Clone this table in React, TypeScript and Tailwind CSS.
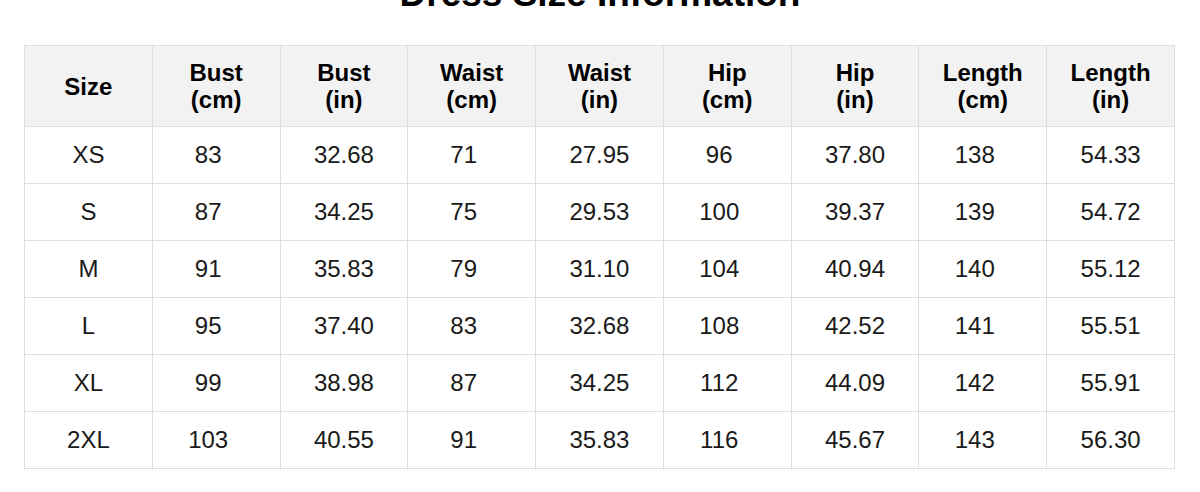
import React from "react";

const headers = [
  ["Size"],
  ["Bust", "(cm)"],
  ["Bust", "(in)"],
  ["Waist", "(cm)"],
  ["Waist", "(in)"],
  ["Hip", "(cm)"],
  ["Hip", "(in)"],
  ["Length", "(cm)"],
  ["Length", "(in)"],
];

const rows = [
  ["XS", "83", "32.68", "71", "27.95", "96", "37.80", "138", "54.33"],
  ["S", "87", "34.25", "75", "29.53", "100", "39.37", "139", "54.72"],
  ["M", "91", "35.83", "79", "31.10", "104", "40.94", "140", "55.12"],
  ["L", "95", "37.40", "83", "32.68", "108", "42.52", "141", "55.51"],
  ["XL", "99", "38.98", "87", "34.25", "112", "44.09", "142", "55.91"],
  ["2XL", "103", "40.55", "91", "35.83", "116", "45.67", "143", "56.30"],
];

export default function App() {
  return (
    <div className="w-[1200px] h-[492px] overflow-hidden bg-white font-['Liberation_Sans',Arial,sans-serif] text-[#111]">
      <h2 className="mt-[-28px] mb-[29px] text-center text-[37px] leading-[44px] font-bold text-black">
        Dress Size Information
      </h2>
      <div className="px-6">
        <table className="w-[1151px] table-fixed border-collapse">
          <thead>
            <tr className="bg-[#f2f2f2] h-[81px]">
              {headers.map((h, i) => (
                <th
                  key={i}
                  className="border border-[#dddddd] text-center align-middle text-[24px] leading-[27px] font-bold text-black"
                >
                  {h.map((line, j) => (
                    <div key={j}>{line}</div>
                  ))}
                </th>
              ))}
            </tr>
          </thead>
          <tbody>
            {rows.map((r, i) => (
              <tr key={i} className="h-[57px]">
                {r.map((v, j) => (
                  <td
                    key={j}
                    className={`border border-[#dddddd] text-center align-middle text-[24px] leading-[28px] text-[#1a1a1a] ${
                      j % 2 === 1 ? "pr-4" : ""
                    }`}
                  >
                    {v}
                  </td>
                ))}
              </tr>
            ))}
          </tbody>
        </table>
      </div>
    </div>
  );
}
